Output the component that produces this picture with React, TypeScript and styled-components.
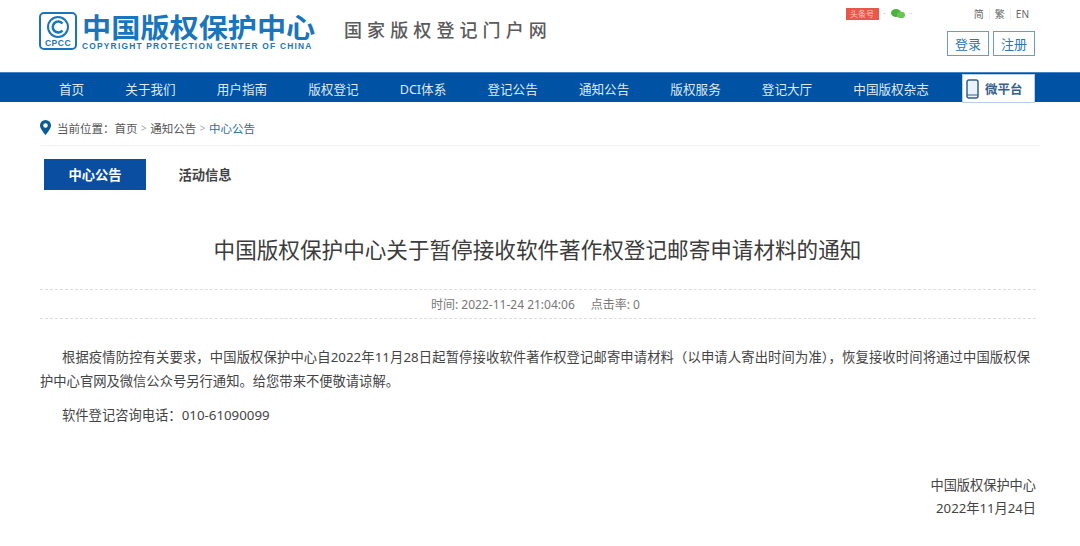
import React from 'react';
import styled, { createGlobalStyle } from 'styled-components';

const GlobalStyle = createGlobalStyle`
  html, body { margin: 0; padding: 0; background: #fff; }
  body { font-family: "Noto Sans", "Noto Sans CJK SC", sans-serif; color: #333; }
`;

const Page = styled.div`
  width: 1080px;
  height: 546px;
  overflow: hidden;
`;

const Header = styled.header`
  height: 72px;
  display: flex;
  padding: 0 45px 0 39px;
  box-sizing: border-box;
`;

const Logo = styled.div`
  display: flex;
  gap: 5px;
  padding-top: 12px;
`;

const LogoText = styled.div`
  display: flex;
  flex-direction: column;
  color: #1b75bc;
`;

const LogoCn = styled.div`
  font-family: "Noto Sans CJK SC", sans-serif;
  font-size: 27px;
  line-height: 29px;
  font-weight: 700;
  width: 234px;
  transform: scaleX(1.08);
  transform-origin: left center;
  white-space: nowrap;
`;

const LogoEn = styled.div`
  font-family: "Liberation Sans", sans-serif;
  font-size: 8.4px;
  line-height: 9px;
  margin-top: 1px;
  font-weight: 700;
  letter-spacing: 1.22px;
  white-space: nowrap;
`;

const Slogan = styled.div`
  margin: 17px 0 0 28px;
  font-family: "Noto Sans CJK SC", sans-serif;
  font-size: 18px;
  line-height: 24px;
  font-weight: 500;
  letter-spacing: 5.1px;
  color: #5a5a5a;
  white-space: nowrap;
`;

const HeaderRight = styled.div`
  margin-left: auto;
  display: flex;
  flex-direction: column;
  align-items: flex-end;
`;

const TopLinks = styled.div`
  display: flex;
  align-items: center;
  height: 16px;
  margin-top: 6px;
  font-size: 10px;
  line-height: 16px;
  color: #666;
`;

const Badge = styled.span`
  background: #e8584a;
  color: #f7c9c2;
  font-family: "Noto Sans CJK SC", sans-serif;
  font-size: 8px;
  line-height: 12px;
  width: 33px;
  text-align: center;
  white-space: nowrap;
`;

const Dot = styled.span`
  color: #aaa;
  font-size: 8px;
  margin: 0 5px;
`;

const LangGroup = styled.div`
  display: flex;
  align-items: center;
  margin: 0 1px 0 52px;
`;

const LangLink = styled.span`
  padding: 0 5px;
  line-height: 12px;
  border-left: 1px solid #eee;
  &:first-child { border-left: 0; }
`;

const AuthRow = styled.div`
  display: flex;
  gap: 4px;
  margin-top: 9px;
`;

const AuthButton = styled.button`
  width: 42px;
  height: 25px;
  padding: 0;
  background: #fff;
  border: 1px solid #6f9cbd;
  color: #2a76b5;
  font-family: "Noto Sans CJK SC", sans-serif;
  font-size: 13px;
  line-height: 22px;
`;

const Nav = styled.nav`
  height: 30px;
  background: #0052a4;
  border-top: 1px solid #3f86c8;
  box-sizing: border-box;
  display: flex;
  align-items: center;
  padding: 1px 0 0 59px;
  gap: 41.1px;
  position: relative;
`;

const NavItem = styled.a`
  font-size: 12.6px;
  color: #dfe9f4;
  white-space: nowrap;
`;

const MicroTab = styled.div`
  position: absolute;
  left: 962px;
  top: 1px;
  width: 73px;
  height: 29px;
  padding-left: 3px;
  box-sizing: border-box;
  background: #fff;
  border: 1px solid #b9d0e8;
  display: flex;
  align-items: center;
  gap: 6px;
  font-size: 12.5px;
  font-weight: 700;
  color: #35628c;
`;

const Crumbs = styled.div`
  margin: 0 40px;
  height: 44px;
  display: flex;
  align-items: center;
  padding-top: 8px;
  box-sizing: border-box;
  gap: 6px;
  font-size: 11.5px;
  color: #555;
  border-bottom: 1px solid #f0f0f0;
`;

const CrumbText = styled.span<{ $current?: boolean }>`
  color: ${p => (p.$current ? '#2a6f9f' : '#555')};
`;

const Sep = styled.span`
  color: #aaa;
  margin: 0 -2.500px;
  font-size: 10px;
`;

const Tabs = styled.div`
  display: flex;
  padding: 13px 0 0 44px;
`;

const Tab = styled.div<{ $active?: boolean }>`
  width: ${p => (p.$active ? '102px' : '118px')};
  height: 31px;
  display: flex;
  align-items: center;
  justify-content: center;
  font-size: 13.3px;
  font-weight: 700;
  color: ${p => (p.$active ? '#fff' : '#444')};
  background: ${p => (p.$active ? '#0a4ea2' : 'transparent')};
`;

const Title = styled.h1`
  margin: 42px 0 0;
  padding-right: 5px;
  text-align: center;
  font-size: 21.6px;
  line-height: 36px;
  font-weight: 400;
  color: #3c3c3c;
  white-space: nowrap;
`;

const Meta = styled.div`
  margin: 21px 44px 0 40px;
  height: 28px;
  border-top: 1px dashed #ddd;
  border-bottom: 1px dashed #ddd;
  display: flex;
  justify-content: center;
  align-items: center;
  gap: 16px;
  font-size: 12px;
  color: #777;
  padding-right: 5px;
`;

const Article = styled.article`
  margin: 26px 50px 0 40px;
  font-size: 13.3px;
  line-height: 24px;
  color: #444;
`;

const Para = styled.p`
  margin: 0 0 10px;
  text-indent: 22px;
  text-align: justify;
`;

const Signoff = styled.div`
  margin: 47px 44px 0 0;
  text-align: right;
  font-size: 13.2px;
  line-height: 23px;
  color: #444;
`;

const navItems = ['首页', '关于我们', '用户指南', '版权登记', 'DCI体系', '登记公告', '通知公告', '版权服务', '登记大厅', '中国版权杂志'];

const LogoMark = () => (
  <svg width="38" height="38" viewBox="0 0 38 38">
    <rect x="1" y="1" width="36" height="36" rx="4" fill="none" stroke="#1b75bc" strokeWidth="2" />
    <circle cx="19" cy="15" r="10" fill="none" stroke="#1b75bc" strokeWidth="2" />
    <path d="M23.500 11.500a5.500 5.500 0 1 0 0 7" fill="none" stroke="#1b75bc" strokeWidth="2.500" />
    <text x="19" y="34" textAnchor="middle" fontSize="8.500" fontWeight="700" letterSpacing="0.500" fill="#1b75bc" fontFamily="Liberation Sans">CPCC</text>
  </svg>
);

const WeChatIcon = () => (
  <svg width="14" height="10" viewBox="0 0 14 10">
    <ellipse cx="5" cy="4" rx="5" ry="4" fill="#4bb33a" />
    <ellipse cx="10" cy="6" rx="4" ry="3.300" fill="#6cc35a" />
  </svg>
);

const PhoneIcon = () => (
  <svg width="13" height="20" viewBox="0 0 13 20">
    <rect x="1" y="1" width="11" height="18" rx="2" fill="#eaf3fb" stroke="#35628c" strokeWidth="1.500" />
    <path d="M1 16h11" stroke="#35628c" />
  </svg>
);

const PinIcon = () => (
  <svg width="11" height="15" viewBox="0 0 11 15">
    <path d="M5.500 0A5.500 5.500 0 0 0 0 5.500C0 9 5.500 15 5.500 15S11 9 11 5.500A5.500 5.500 0 0 0 5.500 0zm0 7.800a2.300 2.300 0 1 1 0-4.600 2.300 2.300 0 0 1 0 4.600z" fill="#0a5a96" />
  </svg>
);

export default function App() {
  return (
    <Page>
      <GlobalStyle />
      <Header>
        <Logo>
          <LogoMark />
          <LogoText>
            <LogoCn>中国版权保护中心</LogoCn>
            <LogoEn>COPYRIGHT PROTECTION CENTER OF CHINA</LogoEn>
          </LogoText>
        </Logo>
        <Slogan>国家版权登记门户网</Slogan>
        <HeaderRight>
          <TopLinks>
            <Badge>头条号</Badge>
            <Dot>·</Dot>
            <WeChatIcon />
            <Dot>·</Dot>
            <LangGroup>
              <LangLink>简</LangLink>
              <LangLink>繁</LangLink>
              <LangLink>EN</LangLink>
            </LangGroup>
          </TopLinks>
          <AuthRow>
            <AuthButton>登录</AuthButton>
            <AuthButton>注册</AuthButton>
          </AuthRow>
        </HeaderRight>
      </Header>
      <Nav>
        {navItems.map(item => (
          <NavItem key={item}>{item}</NavItem>
        ))}
        <MicroTab>
          <PhoneIcon />
          微平台
        </MicroTab>
      </Nav>
      <Crumbs>
        <PinIcon />
        <CrumbText>当前位置：首页</CrumbText>
        <Sep>&gt;</Sep>
        <CrumbText>通知公告</CrumbText>
        <Sep>&gt;</Sep>
        <CrumbText $current>中心公告</CrumbText>
      </Crumbs>
      <Tabs>
        <Tab $active>中心公告</Tab>
        <Tab>活动信息</Tab>
      </Tabs>
      <Title>中国版权保护中心关于暂停接收软件著作权登记邮寄申请材料的通知</Title>
      <Meta>
        <span>时间: 2022-11-24 21:04:06</span>
        <span>点击率: 0</span>
      </Meta>
      <Article>
        <Para>根据疫情防控有关要求，中国版权保护中心自2022年11月28日起暂停接收软件著作权登记邮寄申请材料（以申请人寄出时间为准），恢复接收时间将通过中国版权保护中心官网及微信公众号另行通知。给您带来不便敬请谅解。</Para>
        <Para>软件登记咨询电话：010-61090099</Para>
      </Article>
      <Signoff>
        <div>中国版权保护中心</div>
        <div>2022年11月24日</div>
      </Signoff>
    </Page>
  );
}
